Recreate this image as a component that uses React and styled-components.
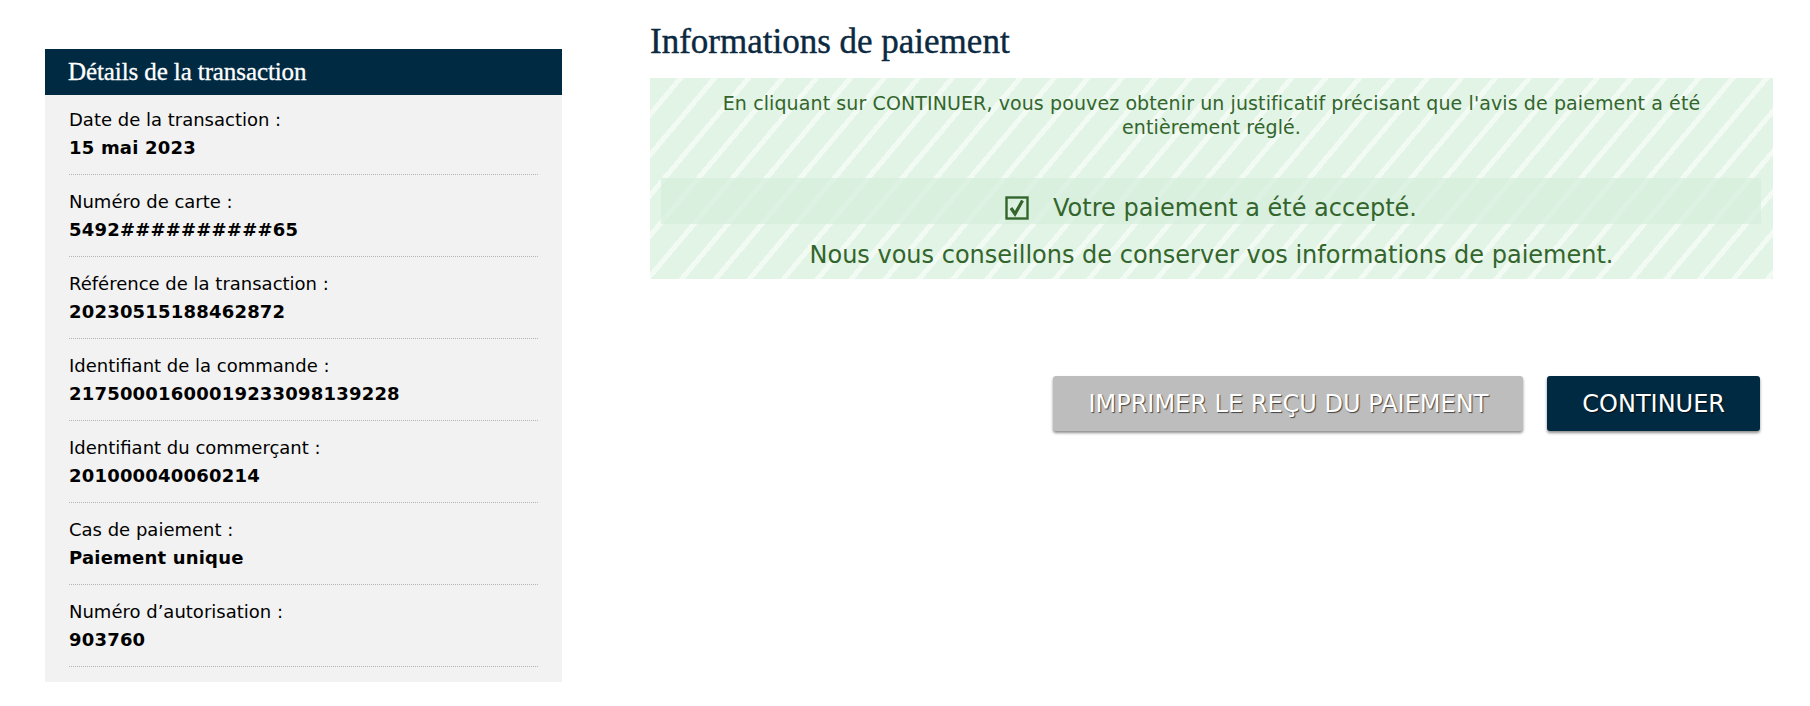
import styled, { createGlobalStyle } from "styled-components";

const GlobalStyle = createGlobalStyle`
  html, body {
    margin: 0;
    padding: 0;
    background: #fff;
  }
  body {
    font-family: "DejaVu Sans", Verdana, sans-serif;
    color: #000;
  }
`;

const details = [
  { label: "Date de la transaction :", value: "15 mai 2023" },
  { label: "Numéro de carte :", value: "5492##########65" },
  { label: "Référence de la transaction :", value: "20230515188462872" },
  { label: "Identifiant de la commande :", value: "21750001600019233098139228" },
  { label: "Identifiant du commerçant :", value: "201000040060214" },
  { label: "Cas de paiement :", value: "Paiement unique" },
  { label: "Numéro d’autorisation :", value: "903760" },
];

const CheckIcon = () => (
  <svg width="24" height="24" viewBox="0 0 24 24" aria-hidden="true">
    <rect x="1.5" y="1.5" width="21" height="21" fill="none" stroke="#33652c" strokeWidth="2.4" />
    <path d="M6 12 L10 18 L17.5 4.5" fill="none" stroke="#33652c" strokeWidth="3.2" />
  </svg>
);

export default () => {
  return (
    <>
      <GlobalStyle />
      <Page>
        <Sidebar>
          <SidebarTitle>Détails de la transaction</SidebarTitle>
          <DetailList>
            {details.map((item, index) => (
              <DetailRow key={index}>
                <DetailLabel>{item.label}</DetailLabel>
                <DetailValue>{item.value}</DetailValue>
              </DetailRow>
            ))}
          </DetailList>
        </Sidebar>

        <Main>
          <Heading>Informations de paiement</Heading>
          <SuccessBox>
            <Notice>
              En cliquant sur CONTINUER, vous pouvez obtenir un justificatif précisant que l'avis de paiement a été
              <br />
              entièrement réglé.
            </Notice>
            <AcceptedBand>
              <CheckIcon />
              <span>Votre paiement a été accepté.</span>
            </AcceptedBand>
            <Advice>Nous vous conseillons de conserver vos informations de paiement.</Advice>
          </SuccessBox>

          <Actions>
            <Button $variant="secondary">IMPRIMER LE REÇU DU PAIEMENT</Button>
            <Button>CONTINUER</Button>
          </Actions>
        </Main>
      </Page>
    </>
  );
};

const Page = styled.div`
  display: grid;
  grid-template-columns: 517px 1fr;
  column-gap: 88px;
  align-items: start;
  padding: 0 37px 0 45px;
`;

const Sidebar = styled.aside`
  margin-top: 49px;
  background: #f2f2f2;
  padding-bottom: 15px;
`;

const SidebarTitle = styled.h2`
  margin: 0;
  height: 46px;
  padding: 0 23px;
  background: #002a42;
  color: #fff;
  font-family: "Liberation Serif", "Times New Roman", serif;
  font-weight: normal;
  font-size: 25px;
  letter-spacing: -0.1px;
  line-height: 46px;
  -webkit-text-stroke: 0.3px #fff;
`;

const DetailList = styled.div`
  padding: 0 24px;
`;

const DetailRow = styled.div`
  padding: 13px 0 12px;
  border-bottom: 1px dotted #b5b5b5;

  &:first-child {
    padding-top: 11px;
  }
`;

const DetailLabel = styled.div`
  font-size: 18px;
  line-height: 28px;
`;

const DetailValue = styled.div`
  font-size: 18px;
  line-height: 28px;
  font-weight: bold;
  letter-spacing: 0.2px;
`;

const Main = styled.main`
  display: flex;
  flex-direction: column;
`;

const Heading = styled.h1`
  margin: 22px 0 0;
  color: #0b2940;
  font-family: "Liberation Serif", "Times New Roman", serif;
  font-weight: normal;
  font-size: 35px;
  letter-spacing: 0;
  line-height: 40px;
  -webkit-text-stroke: 0.4px #0b2940;
`;

const SuccessBox = styled.section`
  margin-top: 16px;
  padding: 13px 0 9px;
  background-color: #e2f4e6;
  background-image: repeating-linear-gradient(
    130deg,
    transparent 0px,
    transparent 21px,
    rgba(255, 255, 255, 0.55) 21px,
    rgba(255, 255, 255, 0.55) 26px
  );
  color: #33652c;
  text-align: center;
`;

const Notice = styled.p`
  margin: 0;
  font-size: 19px;
  letter-spacing: 0.1px;
  line-height: 24px;
`;

const AcceptedBand = styled.div`
  margin: 39px 12px 0 11px;
  height: 46px;
  padding-top: 14px;
  box-sizing: border-box;
  background: rgba(214, 238, 219, 0.7);
  display: flex;
  align-items: center;
  justify-content: center;
  gap: 24px;
  font-size: 24px;
  line-height: 32px;

  svg {
    flex: none;
  }
`;

const Advice = styled.p`
  margin: 16px 0 0;
  font-size: 24px;
  line-height: 30px;
`;

const Actions = styled.div`
  display: flex;
  justify-content: flex-end;
  gap: 24px;
  margin: 97px 13px 0 0;
`;

const Button = styled.button`
  height: 55px;
  padding: 0 35px;
  border: none;
  border-radius: 3px;
  background: ${({ $variant }) => ($variant === "secondary" ? "#bdbdbd" : "#002a42")};
  color: #fff;
  font-family: "DejaVu Sans", Verdana, sans-serif;
  font-size: 24px;
  text-shadow: 1px 1px 1px rgba(0, 0, 0, 0.65);
  box-shadow: 0 2px 3px rgba(0, 0, 0, 0.45);
  cursor: pointer;
`;
